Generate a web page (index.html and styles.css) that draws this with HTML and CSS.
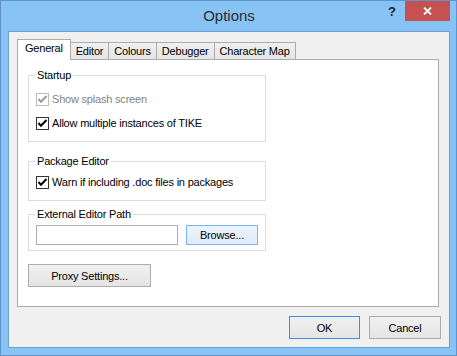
FILE: index.html
```html
<!DOCTYPE html>
<html lang="en">
<head>
    <meta charset="UTF-8">
    <title>Options</title>
    <link rel="stylesheet" href="styles.css">
</head>
<body>
    <div class="window">
        <div class="titlebar">
            <div></div>
            <div class="title">Options</div>
            <div class="controls">
                <span class="help">?</span>
                <span class="close">
                    <svg width="9" height="8" viewBox="0 0 9 8"><path d="M1 0.5 L8 7.5 M8 0.5 L1 7.5" stroke="#fff" stroke-width="1.8" fill="none"/></svg>
                </span>
            </div>
        </div>

        <div class="client">
            <div class="tabctl">
                <div class="tabs">
                    <div class="tab active">General</div>
                    <div class="tab">Editor</div>
                    <div class="tab">Colours</div>
                    <div class="tab">Debugger</div>
                    <div class="tab">Character Map</div>
                </div>
                <div class="panel">
                    <fieldset class="group startup">
                        <legend>Startup</legend>
                        <label class="check disabled">
                            <span class="box"><svg width="11" height="11" viewBox="0 0 11 11"><path d="M1.5 5 L4 7.8 L9.5 2" /></svg></span>Show splash screen
                        </label>
                        <label class="check">
                            <span class="box"><svg width="11" height="11" viewBox="0 0 11 11"><path d="M1.5 5 L4 7.8 L9.5 2" /></svg></span>Allow multiple instances of TIKE
                        </label>
                    </fieldset>

                    <fieldset class="group package">
                        <legend>Package Editor</legend>
                        <label class="check">
                            <span class="box"><svg width="11" height="11" viewBox="0 0 11 11"><path d="M1.5 5 L4 7.8 L9.5 2" /></svg></span>Warn if including .doc files in packages
                        </label>
                    </fieldset>

                    <fieldset class="group external">
                        <legend>External Editor Path</legend>
                        <div class="path-row">
                            <input type="text" class="path">
                            <button class="btn browse">Browse...</button>
                        </div>
                    </fieldset>

                    <button class="btn proxy">Proxy Settings...</button>
                </div>
            </div>

            <div class="actions">
                <button class="btn default">OK</button>
                <button class="btn">Cancel</button>
            </div>
        </div>
    </div>
</body>
</html>
```

FILE: styles.css
```css
* {
    box-sizing: border-box;
}
body {
    margin: 0;
    font-family: "Liberation Sans", Arial, sans-serif;
    font-size: 11px;
    line-height: 13px;
    letter-spacing: -0.2px;
    color: #000;
}
.window {
    width: 457px;
    height: 356px;
    border: 1px solid #5f93c8;
    background: #88c3f6;
    padding: 0 6px 7px 7px;
    display: flex;
    flex-direction: column;
}
.titlebar {
    height: 30px;
    display: grid;
    grid-template-columns: 1fr auto 1fr;
}
.title {
    font-size: 15px;
    letter-spacing: 0;
    color: #2b2b2b;
    line-height: 30px;
}
.controls {
    display: flex;
    justify-content: flex-end;
    align-items: flex-start;
}
.help {
    width: 26px;
    height: 20px;
    font-weight: bold;
    font-size: 13px;
    line-height: 21px;
    text-align: center;
    color: #222;
    letter-spacing: 0;
}
.close {
    width: 45px;
    height: 20px;
    background: #c75050;
    display: flex;
    align-items: center;
    justify-content: center;
}
.client {
    flex: 1;
    border: 1px solid #6d9fd2;
    background: #f0f0f0;
    padding: 7px 8px 8px 8px;
    display: flex;
    flex-direction: column;
}
.tabctl {
    flex: 1;
    display: flex;
    flex-direction: column;
    margin-right: 2px;
}
.tabs {
    display: flex;
    align-items: flex-end;
}
.tab {
    height: 17px;
    border: 1px solid #acacac;
    border-bottom: 0;
    padding: 0 5px;
    line-height: 16px;
    background: linear-gradient(#f0f0f0, #e5e5e5);
    margin-left: -1px;
}
.tab.active {
    height: 21px;
    margin-left: 0;
    margin-bottom: -1px;
    padding: 0 7px 3px;
    line-height: 17px;
    background: #fff;
    position: relative;
    z-index: 1;
}
.panel {
    flex: 1;
    background: #fff;
    border: 1px solid #acacac;
    padding: 9px 10px;
    display: flex;
    flex-direction: column;
    align-items: flex-start;
}
.group {
    width: 238px;
    margin: 0;
    padding: 0 7px;
    border: 1px solid #dcdcdc;
    min-width: 0;
}
.group legend {
    padding: 0 2px;
    margin-left: -1px;
    line-height: 13px;
}
.startup {
    padding-top: 9px;
    padding-bottom: 9px;
}
.package {
    margin-top: 13px;
    padding-top: 6px;
    padding-bottom: 9px;
}
.external {
    margin-top: 7px;
    padding-top: 4px;
    padding-bottom: 5px;
}
.check {
    display: flex;
    align-items: center;
    height: 17px;
}
.check + .check {
    margin-top: 7px;
}
.box {
    width: 13px;
    height: 13px;
    border: 1px solid #333;
    background: #fff;
    margin-right: 3px;
    flex: none;
}
.box svg {
    display: block;
}
.box path {
    stroke: #000;
    stroke-width: 2;
    fill: none;
}
.check.disabled {
    color: #838383;
}
.check.disabled .box {
    border-color: #bcbcbc;
}
.check.disabled .box path {
    stroke: #9a9a9a;
}
.path-row {
    display: flex;
}
.path {
    width: 142px;
    height: 20px;
    border: 1px solid #abadb3;
    background: #fff;
    margin: 0;
    padding: 0 2px;
}
.btn {
    font-family: "Liberation Sans", Arial, sans-serif;
    font-size: 11px;
    letter-spacing: -0.2px;
    color: #000;
    height: 23px;
    border: 1px solid #acacac;
    background: linear-gradient(#f0f0f0, #e5e5e5);
    padding: 0;
    margin: 0;
}
.browse {
    width: 72px;
    height: 20px;
    margin-left: 8px;
    border-color: #7eb4ea;
    background: linear-gradient(#ecf4fc, #dcecfc);
}
.proxy {
    width: 123px;
    margin-top: 13px;
}
.actions {
    display: flex;
    justify-content: flex-end;
    gap: 9px;
    margin-top: 9px;
}
.actions .btn {
    width: 72px;
}
.actions .default {
    width: 71px;
    border-color: #3c8fe6;
}
```
